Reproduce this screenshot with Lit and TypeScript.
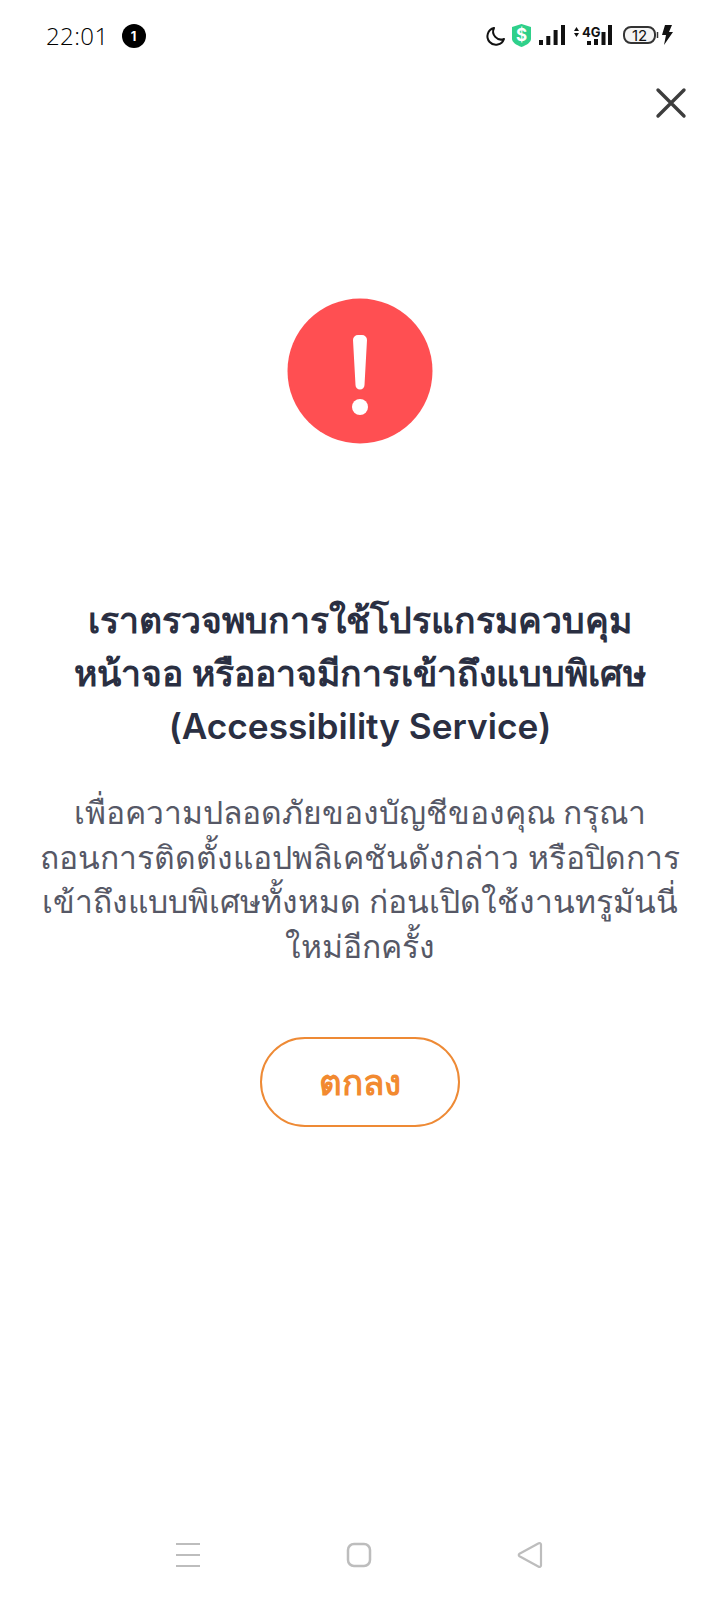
import { LitElement, html, css } from 'lit';
import { customElement } from 'lit/decorators.js';

@customElement('app-root')
export class AppRoot extends LitElement {
  static styles = css`
    :host {
      display: block;
      width: 720px;
      height: 1600px;
      background: #fff;
      font-family: 'Inter', 'Noto Sans', 'DejaVu Sans', sans-serif;
    }

    .page {
      display: flex;
      flex-direction: column;
      height: 1600px;
    }

    /* Status bar */
    .status {
      display: flex;
      align-items: center;
      justify-content: space-between;
      height: 72px;
      padding: 0 46px;
      box-sizing: border-box;
    }

    .status__left {
      display: flex;
      align-items: center;
      gap: 13px;
    }

    .status__time {
      font-family: 'Open Sans', sans-serif;
      font-size: 24px;
      font-weight: 300;
      color: #000;
      letter-spacing: 0.4px;
      margin-top: -2px;
    }

    .status__badge {
      width: 24px;
      height: 24px;
      border-radius: 50%;
      background: #000;
      color: #fff;
      font-size: 13px;
      font-weight: 700;
      display: flex;
      align-items: center;
      justify-content: center;
    }

    .net {
      display: block;
      margin: -2px -1px 0 0;
    }

    /* Close */
    .close-row {
      display: flex;
      justify-content: flex-end;
      padding: 15px 33px 0 0;
    }

    /* Content */
    .alert {
      align-self: center;
      margin-top: 179px;
    }

    .title {
      margin: 150px 0 0;
      text-align: center;
      font-size: 35.200px;
      line-height: 52px;
      font-weight: 600;
      color: #2a2f42;
    }

    .title__thai {
      font-size: 35.600px;
    }

    .desc {
      margin: 39px 0 0;
      padding: 0 20px;
      text-align: center;
      font-size: 31.800px;
      line-height: 44.600px;
      font-weight: 300;
      color: #565866;
    }

    .ok {
      align-self: center;
      margin-top: 68px;
      width: 200px;
      height: 90px;
      box-sizing: border-box;
      border: 2px solid #ee8a35;
      border-radius: 45px;
      background: none;
      color: #f28a30;
      font: inherit;
      font-size: 35px;
      font-weight: 700;
    }

    /* Nav bar */
    .nav {
      margin-top: auto;
      display: flex;
      justify-content: space-between;
      align-items: center;
      padding: 0 177px 31px 175px;
    }
  `;

  render() {
    return html`
      <div class="page">
        <div class="status">
          <div class="status__left">
            <span class="status__time">22:01</span>
            <span class="status__badge">1</span>
          </div>
          <svg class="net" width="190" height="30" viewBox="0 0 190 30">
            <path d="M9 8a8.500 8.500 0 1 0 10 11a8 8 0 0 1-10-11z" fill="none" stroke="#111" stroke-width="2" stroke-linejoin="round"/>
            <path d="M27 7l9.500-3l9.500 3v12c0 3-4 6-9.500 8c-5.500-2-9.500-5-9.500-8z" fill="#2fd08a"/>
            <text x="36.500" y="21" text-anchor="middle" font-family="Inter, sans-serif" font-size="17" font-weight="700" fill="#fff">$</text>
            <g fill="#111">
              <rect x="54" y="20" width="4" height="5"/>
              <rect x="61.300" y="16" width="4" height="9"/>
              <rect x="68.600" y="10" width="4" height="15"/>
              <rect x="76" y="5" width="4" height="20"/>
              <path d="M89 11l2.500-4 2.500 4zM89 13l2.500 4 2.500-4z"/>
              <rect x="102" y="21" width="4" height="4"/>
              <rect x="109" y="19" width="4" height="6"/>
              <rect x="116.500" y="12" width="4" height="13"/>
              <rect x="123" y="5" width="4" height="20"/>
            </g>
            <text x="97" y="17" font-family="Inter, sans-serif" font-size="13" font-weight="700" fill="#111">4G</text>
            <rect x="139" y="7" width="31" height="16" rx="7" fill="#f4f4f4" stroke="#333" stroke-width="2"/>
            <path d="M172.500 12v6" stroke="#333" stroke-width="1.500"/>
            <text x="154.500" y="20.500" text-anchor="middle" font-family="Inter, sans-serif" font-size="15" fill="#111">12</text>
            <path d="M180 5h7l-3 7h4l-9 13l2-10h-4z" fill="#111"/>
          </svg>
        </div>

        <div class="close-row">
          <svg width="32" height="32" viewBox="0 0 32 32">
            <path d="M3 3l26 26M29 3L3 29" stroke="#3d3d3d" stroke-width="3.400" stroke-linecap="round"/>
          </svg>
        </div>

        <svg class="alert" width="146" height="146" viewBox="0 0 146 146">
          <circle cx="73" cy="73" r="72.500" fill="#ff4f52"/>
          <path d="M66 42a5 5 0 0 1 5-5h4a5 5 0 0 1 5 5l-2.500 45a4.500 4.500 0 0 1-9 0z" fill="#fff"/>
          <circle cx="73" cy="109" r="8" fill="#fff"/>
        </svg>

        <h1 class="title">
          <span class="title__thai">เราตรวจพบการใช้โปรแกรมควบคุม</span><br />
          <span class="title__thai">หน้าจอ หรืออาจมีการเข้าถึงแบบพิเศษ</span><br />
          (Accessibility Service)
        </h1>

        <p class="desc">
          เพื่อความปลอดภัยของบัญชีของคุณ กรุณา<br />
          ถอนการติดตั้งแอปพลิเคชันดังกล่าว หรือปิดการ<br />
          เข้าถึงแบบพิเศษทั้งหมด ก่อนเปิดใช้งานทรูมันนี่<br />
          ใหม่อีกครั้ง
        </p>

        <button class="ok">ตกลง</button>

        <div class="nav">
          <svg width="26" height="26" viewBox="0 0 26 26">
            <path d="M1 2h24M1 13h24M1 24h24" stroke="#bdbdbd" stroke-width="2"/>
          </svg>
          <svg width="26" height="26" viewBox="0 0 26 26">
            <rect x="2" y="2" width="22" height="22" rx="6" fill="none" stroke="#bdbdbd" stroke-width="2.500"/>
          </svg>
          <svg width="26" height="28" viewBox="0 0 26 28">
            <path d="M24 3.500v21a1.500 1.500 0 0 1-2.300 1.200L2.500 15.300a1.500 1.500 0 0 1 0-2.600L21.700 2.300A1.500 1.500 0 0 1 24 3.500z" fill="none" stroke="#bdbdbd" stroke-width="2.200"/>
          </svg>
        </div>
      </div>
    `;
  }
}
